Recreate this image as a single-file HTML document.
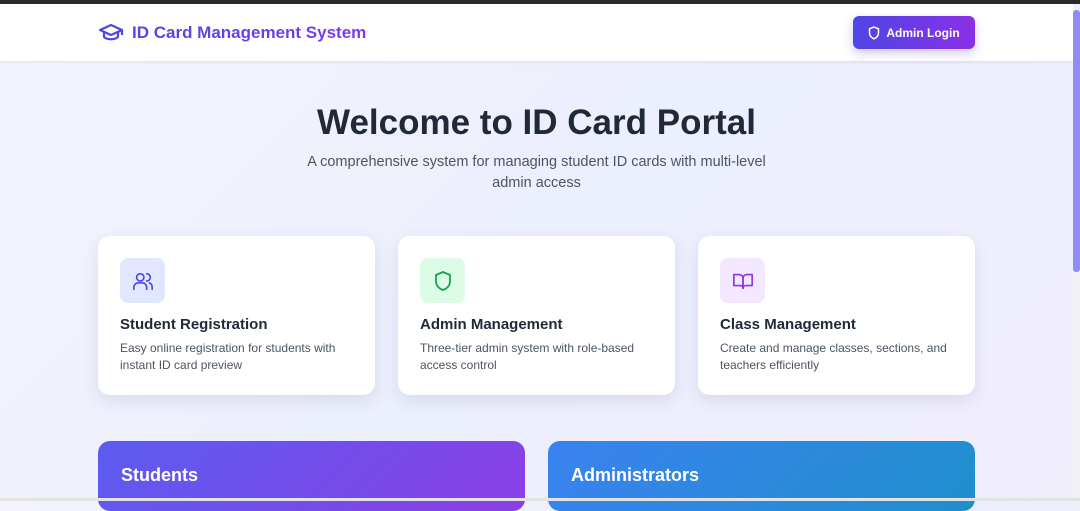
<!DOCTYPE html>
<html><head><style>
*{box-sizing:border-box;margin:0;padding:0}
body{width:1080px;height:501px;overflow:hidden;font-family:"Liberation Sans",sans-serif;background:linear-gradient(135deg,#f3f4fd,#eceffc 50%,#f1eefc);position:relative}
.top{position:absolute;left:0;top:0;width:1080px;height:4px;background:#2b2b2b}
.nav{position:absolute;top:4px;left:0;width:1073px;height:57px;background:#fff;box-shadow:0 1px 4px rgba(0,0,0,.08)}
.logo{position:absolute;left:98px;top:19px;display:flex;align-items:center;gap:8px;font-size:17px;font-weight:bold;background:linear-gradient(90deg,#4f46e5,#7c3aed 100%);-webkit-background-clip:text;color:transparent}
.btn{position:absolute;left:853px;top:12px;width:122px;height:33px;border-radius:6px;background:linear-gradient(90deg,#4f46e5,#8b2fe6);color:#fff;font-size:12px;font-weight:bold;display:flex;align-items:center;justify-content:center;gap:6px;box-shadow:0 4px 10px rgba(99,70,230,.3)}
h1{position:absolute;top:103px;left:0;width:1073px;text-align:center;font-size:35px;color:#1f2937;font-weight:bold}
.sub{position:absolute;top:152px;left:306px;width:461px;text-align:center;font-size:14.5px;color:#4b5563;line-height:21px}
.card{position:absolute;top:236px;width:277px;height:159px;background:#fff;border-radius:12px;box-shadow:0 6px 16px rgba(60,70,120,.12)}
.ic{position:absolute;left:22px;top:22px;width:45px;height:45px;border-radius:8px;display:flex;align-items:center;justify-content:center}
.card h3{position:absolute;left:22px;top:80px;font-size:15px;color:#1f2937}
.card p{position:absolute;left:22px;top:104px;width:230px;font-size:12px;line-height:17px;color:#4b5563}
.big{position:absolute;top:441px;width:427px;height:70px;border-radius:12px;color:#fff;font-size:18px;font-weight:bold;padding:24px 0 0 23px}
.sb{position:absolute;right:0;top:4px;width:7px;height:497px;background:#f1f1f1}
.th{position:absolute;right:0;top:10px;width:7px;height:262px;background:#8f8cf3;border-radius:3px}
.bot{position:absolute;left:0;top:498px;width:1080px;height:3px;background:#e3e3e3}
</style></head><body>
<div class="top"></div>
<div class="nav">
<div class="logo"><svg width="26" height="20" viewBox="0 0 24 20" fill="none" stroke="#4f46e5" stroke-width="2.2" stroke-linejoin="round"><path d="M1 7l11-5 11 5-11 5z"/><path d="M5 9v5c3 3 11 3 14 0V9"/><path d="M23 7v5"/></svg><span>ID Card Management System</span></div>
<div class="btn"><svg width="12" height="14" viewBox="0 0 12 14" fill="none" stroke="#fff" stroke-width="1.5"><path d="M6 1L1.5 2.8v4c0 3 2 5 4.5 6 2.5-1 4.5-3 4.5-6v-4z"/></svg>Admin Login</div>
</div>
<h1>Welcome to ID Card Portal</h1>
<div class="sub">A comprehensive system for managing student ID cards with multi-level admin access</div>
<div class="card" style="left:98px"><div class="ic" style="background:#e0e7ff"><svg width="22" height="22" viewBox="0 0 24 24" fill="none" stroke="#4f46e5" stroke-width="1.8" stroke-linecap="round"><circle cx="9" cy="8" r="4"/><path d="M2 21v-2a5 5 0 0 1 5-5h4a5 5 0 0 1 5 5v2"/><path d="M16 4a4 4 0 0 1 0 8"/><path d="M19 14a5 5 0 0 1 3 5v2"/></svg></div><h3>Student Registration</h3><p>Easy online registration for students with instant ID card preview</p></div>
<div class="card" style="left:398px"><div class="ic" style="background:#dcfce7"><svg width="20" height="22" viewBox="0 0 20 22" fill="none" stroke="#16a34a" stroke-width="1.8"><path d="M10 2L3 5v6c0 4.5 3 7.5 7 9 4-1.5 7-4.5 7-9V5z"/></svg></div><h3>Admin Management</h3><p>Three-tier admin system with role-based access control</p></div>
<div class="card" style="left:698px"><div class="ic" style="background:#f3e8ff"><svg width="22" height="20" viewBox="0 0 24 20" fill="none" stroke="#9333ea" stroke-width="1.8" stroke-linejoin="round"><path d="M2 3h6a4 4 0 0 1 4 4v11a3 3 0 0 0-3-3H2z"/><path d="M22 3h-6a4 4 0 0 0-4 4v11a3 3 0 0 1 3-3h7z"/></svg></div><h3>Class Management</h3><p>Create and manage classes, sections, and teachers efficiently</p></div>
<div class="big" style="left:98px;background:linear-gradient(135deg,#5b5cf0,#8b3fe6)">Students</div>
<div class="big" style="left:548px;background:linear-gradient(135deg,#3b82f0,#1e8fcc)">Administrators</div>
<div class="sb"></div><div class="th"></div>
<div class="bot"></div>
</body></html>
